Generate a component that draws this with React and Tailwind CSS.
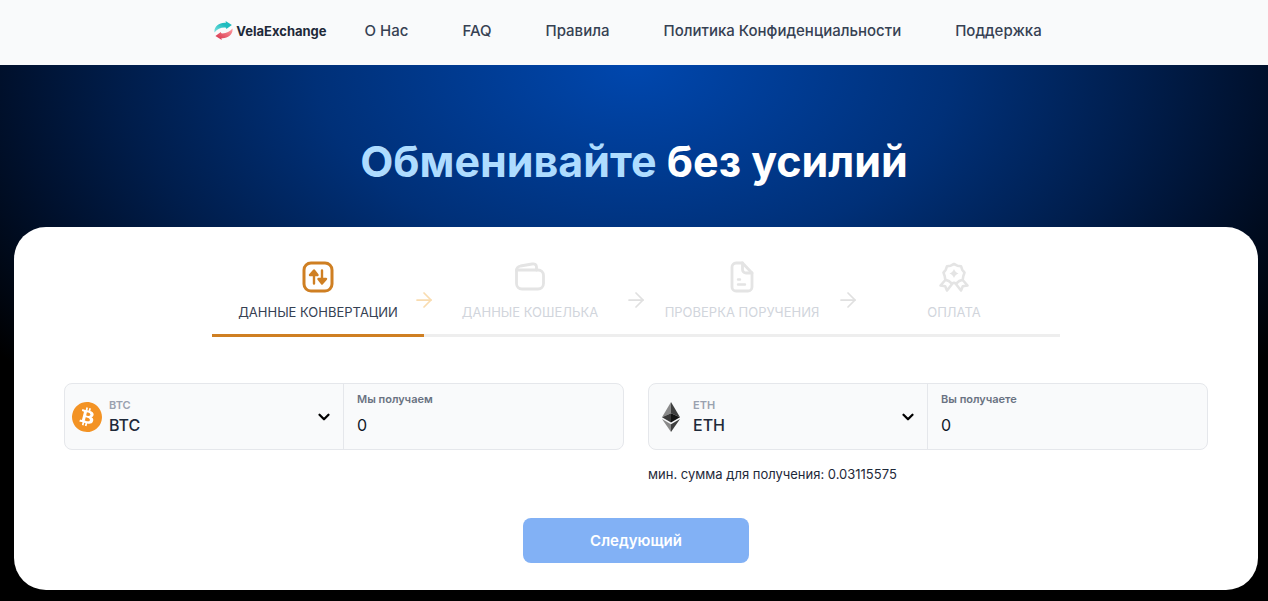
import { useState } from 'react';
import { ArrowRight, ChevronDown } from 'lucide-react';
import { SiBitcoin } from 'react-icons/si';

const NAV_LINKS = ['О Нас', 'FAQ', 'Правила', 'Политика Конфиденциальности', 'Поддержка'];

function Logo() {
  return (
    <a href="#home" className="flex items-center gap-[3px] text-[13px] leading-5 font-bold text-gray-800">
      <svg viewBox="0 0 20 20" className="h-[19px] w-[19px]" aria-hidden="true">
        <defs>
          <linearGradient id="logo-teal" x1="0" y1="1" x2="1" y2="0">
            <stop offset="0" stopColor="#7fe3e0" />
            <stop offset="0.6" stopColor="#1fbcbf" />
          </linearGradient>
          <linearGradient id="logo-red" x1="0" y1="1" x2="1" y2="0">
            <stop offset="0.2" stopColor="#dc4358" />
            <stop offset="1" stopColor="#ff9aa0" />
          </linearGradient>
        </defs>
        <path d="M.5 12C-.2 5.500 5.500 1.200 12.500 1.800L12.200 0 18.800 4.200 13 8.500 12.500 7C8 6.500 3.500 8.200.5 12Z" fill="url(#logo-teal)" />
        <path d="M19.500 8C20.200 14.500 14.500 18.800 7.800 18.200L8.200 20 1.500 15.800 7.200 11.500 7.500 13C12 13.500 16.500 11.800 19.500 8Z" fill="url(#logo-red)" />
      </svg>
      VelaExchange
    </a>
  );
}

function ConvertIcon() {
  return (
    <svg viewBox="0 0 32 32" className="h-8 w-8" fill="none" stroke="currentColor" strokeLinecap="round" strokeLinejoin="round" aria-hidden="true">
      <rect x="2" y="2" width="28" height="28" rx="7" strokeWidth="3" />
      <path d="M12 22.500V10M8 14 12 9.500l3.500 4.500ZM20 9.500v12M16.500 18l3.500 4.500 4-4.500Z" fill="currentColor" strokeWidth="2.400" />
    </svg>
  );
}

function WalletIcon() {
  return (
    <svg viewBox="0 0 32 32" className="h-8 w-8" fill="none" stroke="currentColor" strokeWidth="2.800" strokeLinecap="round" strokeLinejoin="round" aria-hidden="true">
      <path d="M2.500 9v13.500a5.500 5.500 0 0 0 5.500 5.500h16a5.500 5.500 0 0 0 5.500-5.500v-8A5.500 5.500 0 0 0 24 9H2.500" />
      <path d="M2.500 9.500C2.500 7 4 5.500 6.500 5L18 3c3-.5 4.500.8 4.500 3v3" />
    </svg>
  );
}

function DocumentIcon() {
  return (
    <svg viewBox="0 0 32 32" className="h-8 w-8" fill="none" stroke="currentColor" strokeWidth="2.800" strokeLinecap="round" strokeLinejoin="round" aria-hidden="true">
      <path d="M16.500 2H10a4 4 0 0 0-4 4v20a4 4 0 0 0 4 4h12a4 4 0 0 0 4-4V12Z" />
      <path d="M16.500 2v6.500a3.500 3.500 0 0 0 3.500 3.500h6" />
      <path d="M12 18.500h2M12 23.500h7" strokeWidth="2.400" />
    </svg>
  );
}

function MedalIcon() {
  return (
    <svg viewBox="0 0 32 32" className="h-8 w-8" fill="none" stroke="currentColor" strokeWidth="2.600" strokeLinejoin="round" aria-hidden="true">
      <path d="M16 3l3.300 1.700 3.700.5 1.200 3.500 2.300 2.900-1.200 3.500-.6 3.600-3.500 1.300L18.300 22.500 16 21.800l-2.300.7-2.900-2.500-3.500-1.300-.6-3.600-1.200-3.500 2.300-2.900L9 5.200l3.700-.5Z" />
      <path d="M7.300 19 2.500 24.500l4.700.7 1.800 4.300 5.500-7M24.700 19l4.800 5.500-4.700.7-1.800 4.300-5.500-7" />
      <path d="M16 8c.9 2.400 2.100 3.600 4.500 4.500-2.400.9-3.600 2.100-4.500 4.500-.9-2.400-2.100-3.600-4.500-4.500 2.400-.9 3.600-2.100 4.500-4.500Z" fill="currentColor" stroke="none" />
    </svg>
  );
}

function BitcoinIcon() {
  return (
    <span className="block rounded-full bg-white">
      <SiBitcoin className="h-[30px] w-[30px] text-[#f39325]" aria-hidden="true" />
    </span>
  );
}

function EthereumIcon() {
  return (
    <svg viewBox="0 0 30 30" className="h-[30px] w-[30px]" aria-hidden="true">
      <path d="M15 0 6 15.300 15 11.200Z" fill="#8a8a8a" />
      <path d="M15 0 24 15.300 15 11.200Z" fill="#3f3f3f" />
      <path d="M6 15.300 15 11.200V20.500Z" fill="#3a3a3a" />
      <path d="M24 15.300 15 11.200V20.500Z" fill="#141414" />
      <path d="M6 17 15 22.200V30Z" fill="#8a8a8a" />
      <path d="M24 17 15 22.200V30Z" fill="#3f3f3f" />
    </svg>
  );
}

const STEPS = [
  { label: 'ДАННЫЕ КОНВЕРТАЦИИ', Icon: ConvertIcon },
  { label: 'ДАННЫЕ КОШЕЛЬКА', Icon: WalletIcon },
  { label: 'ПРОВЕРКА ПОРУЧЕНИЯ', Icon: DocumentIcon },
  { label: 'ОПЛАТА', Icon: MedalIcon },
];

function Steps({ current }) {
  return (
    <ol className="mx-auto grid max-w-[848px] grid-cols-4">
      {STEPS.map(({ label, Icon }, i) => (
        <li
          key={label}
          className={`relative flex flex-col items-center border-b-3 pb-3 ${
            i === current ? 'border-[#cf7f22]' : 'border-[#eeeeee]'
          }`}
        >
          <span className={i === current ? 'text-[#cf7f22]' : 'text-[#e4e4e4]'}>
            <Icon />
          </span>
          <span
            className={`mt-[9px] text-[13px] leading-5 whitespace-nowrap ${
              i === current ? 'text-gray-700' : 'text-gray-300'
            }`}
          >
            {label}
          </span>
          {/* Arrow straddles the border between two steps */}
          {i < STEPS.length - 1 && (
            <ArrowRight
              className={`absolute top-[27px] -right-3 h-6 w-6 ${
                i === current ? 'text-[#f9dcb0]' : 'text-[#e0e0e0]'
              }`}
              strokeWidth={1.75}
            />
          )}
        </li>
      ))}
    </ol>
  );
}

function CurrencyField({ id, label, currency, Icon, amount, onAmountChange }) {
  return (
    <div className="grid h-[67px] grid-cols-2 rounded-lg border border-gray-200 bg-gray-50">
      <div className="relative flex items-center border-r border-gray-200 pl-[7px]">
        <Icon />
        <div className="flex flex-1 flex-col pl-[7px]">
          <label htmlFor={`${id}-currency`} className="text-[11px] leading-4 font-semibold text-gray-400">
            {currency}
          </label>
          <select
            id={`${id}-currency`}
            className="h-6 w-full appearance-none bg-transparent text-base leading-6 font-medium text-gray-800 outline-none"
          >
            <option>{currency}</option>
          </select>
        </div>
        <ChevronDown className="pointer-events-none absolute right-2.5 h-[18px] w-[18px] text-black" strokeWidth={3} />
      </div>
      <div className="flex flex-col px-[13px] pt-[7px]">
        <label htmlFor={`${id}-amount`} className="text-[11px] leading-4 font-semibold text-gray-500">
          {label}
        </label>
        <input
          id={`${id}-amount`}
          type="text"
          inputMode="decimal"
          value={amount}
          onChange={(e) => onAmountChange(e.target.value)}
          className="mt-1.5 h-6 w-full bg-transparent text-base leading-6 text-gray-900 outline-none"
        />
      </div>
    </div>
  );
}

export default function App() {
  const [send, setSend] = useState('0');
  const [receive, setReceive] = useState('0');

  return (
    <div className="min-h-screen bg-black font-[Inter,sans-serif]">
      <header className="flex h-[65px] items-center justify-center gap-[38px] bg-gray-50 pr-3 pb-1">
        <Logo />
        <nav className="flex items-center gap-[54px]">
          {NAV_LINKS.map((link) => (
            <a key={link} href="#" className="text-[15px] leading-6 font-medium whitespace-nowrap text-gray-700">
              {link}
            </a>
          ))}
        </nav>
      </header>

      <main className="bg-[radial-gradient(ellipse_56%_80%_at_50%_0%,#0047ae_0%,#003078_45%,#001d4b_72%,#00112e_88%,#000_112%)] pb-[11px]">
        <h1 className="pt-[66px] pb-9 text-center text-[43px] leading-[60px] font-bold text-white">
          <span className="text-[#aedcff]">Обменивайте</span> без усилий
        </h1>

        <section className="mr-2.5 ml-3.5 rounded-[32px] bg-white px-[50px] pt-[34px] pb-[27px]">
          <Steps current={0} />

          <form onSubmit={(e) => e.preventDefault()}>
            <div className="mt-[46px] grid grid-cols-2 gap-6">
              <CurrencyField
                id="send"
                label="Мы получаем"
                currency="BTC"
                Icon={BitcoinIcon}
                amount={send}
                onAmountChange={setSend}
              />
              <div>
                <CurrencyField
                  id="receive"
                  label="Вы получаете"
                  currency="ETH"
                  Icon={EthereumIcon}
                  amount={receive}
                  onAmountChange={setReceive}
                />
                <p className="mt-3 text-[13px] leading-6 text-gray-800">мин. сумма для получения: 0.03115575</p>
              </div>
            </div>

            <button
              type="submit"
              className="mx-auto mt-8 block h-[45px] w-[226px] rounded-lg bg-[#82b1f5] pt-0.5 text-[15px] font-semibold text-white"
            >
              Следующий
            </button>
          </form>
        </section>
      </main>
    </div>
  );
}
